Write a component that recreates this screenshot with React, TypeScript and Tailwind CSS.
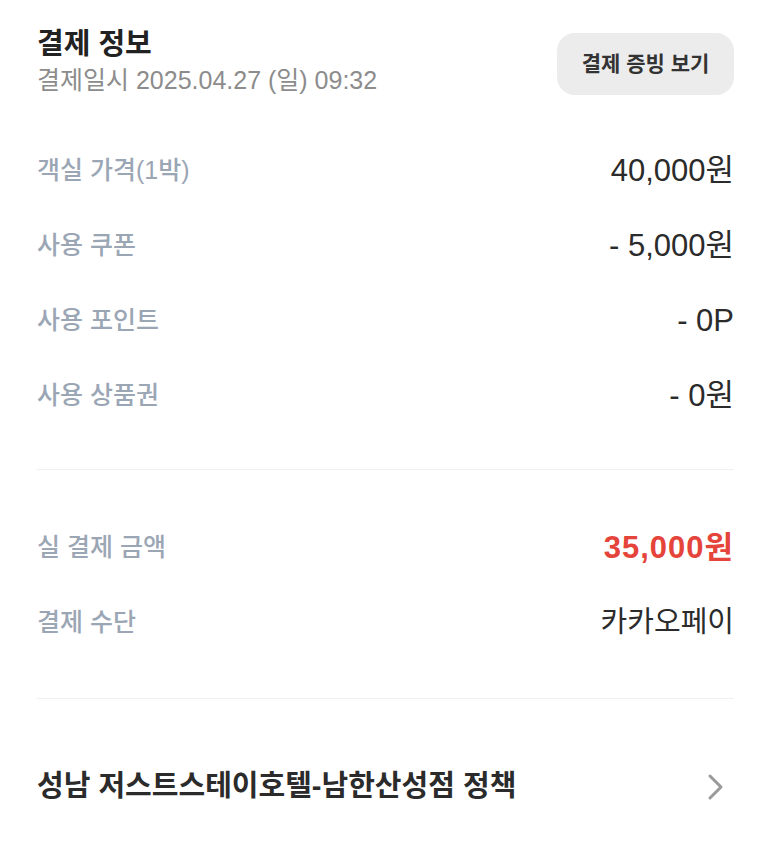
import React from "react";

const font = { fontFamily: '"Liberation Sans", "Noto Sans CJK KR", sans-serif' };

function Row({ label, value, valueClass = "text-[31px] text-[#2b2b2b]" }: { label: string; value: string; valueClass?: string }) {
  return (
    <div className="flex h-[75px] items-center justify-between">
      <span className="text-[25px] font-medium text-[#9ba6b5]">{label}</span>
      <span className={`leading-none ${valueClass}`}>{value}</span>
    </div>
  );
}

export default function App() {
  return (
    <div className="min-h-[842px] w-[773px] bg-white pl-[37px] pr-[39px] pt-[26px]" style={font}>
      <div className="flex items-start justify-between">
        <div className="flex flex-col">
          <span className="text-[29px] font-bold leading-[36px] text-[#222]">결제 정보</span>
          <span className="mt-[2px] text-[25px] leading-[32px] text-[#8c8c8c]">결제일시 2025.04.27 (일) 09:32</span>
        </div>
        <button className="mt-[7px] h-[62px] w-[177px] rounded-[18px] bg-[#ececec] text-[21px] font-bold text-[#333]">
          결제 증빙 보기
        </button>
      </div>

      <div className="mt-[37px]">
        <Row label="객실 가격(1박)" value="40,000원" />
        <Row label="사용 쿠폰" value="- 5,000원" />
        <Row label="사용 포인트" value="- 0P" />
        <Row label="사용 상품권" value="- 0원" />
      </div>

      <div className="mt-[36px] h-px bg-[#f0f0f0]" />

      <div className="mt-[40px]">
        <Row label="실 결제 금액" value="35,000원" valueClass="text-[31px] font-bold tracking-[1px] text-[#e5443a]" />
        <Row label="결제 수단" value="카카오페이" valueClass="text-[29px] text-[#2b2b2b]" />
      </div>

      <div className="mt-[38px] h-px bg-[#f0f0f0]" />

      <div className="mt-[50px] flex h-[75px] items-center justify-between">
        <span className="text-[29px] font-bold text-[#2b2b2b]">성남 저스트스테이호텔-남한산성점 정책</span>
        <svg width="18" height="28" viewBox="0 0 18 28" className="mr-[9px]">
          <path d="M3 3 L14 14 L3 25" fill="none" stroke="#9a9a9a" strokeWidth="3" strokeLinecap="round" strokeLinejoin="round" />
        </svg>
      </div>
    </div>
  );
}
